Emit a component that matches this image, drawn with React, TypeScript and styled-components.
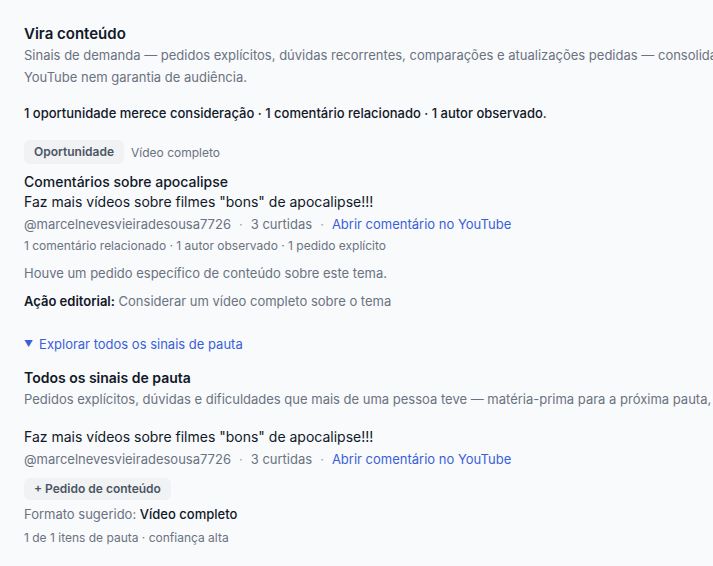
import styled, { createGlobalStyle } from "styled-components";

const GlobalStyle = createGlobalStyle`
  body {
    margin: 0;
    background: #f8fafc;
    font-family: Inter, "Noto Sans", sans-serif;
    color: #111827;
    overflow: hidden;
  }
`;

interface Signal {
  quote: string;
  author: string;
  likes: number;
}

const signal: Signal = {
  quote: 'Faz mais vídeos sobre filmes "bons" de apocalipse!!!',
  author: "@marcelnevesvieiradesousa7726",
  likes: 3,
};

function MetaRow({ s }: { s: Signal }) {
  return (
    <Meta>
      <span>{s.author}</span>
      <Sep>·</Sep>
      <span>{s.likes} curtidas</span>
      <Sep>·</Sep>
      <Link href="#">Abrir comentário no YouTube</Link>
    </Meta>
  );
}

export default function App() {
  return (
    <>
      <GlobalStyle />
      <Page>
        <Title>Vira conteúdo</Title>
        <Desc>
          Sinais de demanda — pedidos explícitos, dúvidas recorrentes, comparações e atualizações
          pedidas — consolidados dos comentários. Não é métrica do YouTube nem garantia de
          audiência.
        </Desc>
        <Summary>1 oportunidade merece consideração · 1 comentário relacionado · 1 autor observado.</Summary>

        <TagRow>
          <Badge>Oportunidade</Badge>
          <Format>Vídeo completo</Format>
        </TagRow>
        <ItemTitle>Comentários sobre apocalipse</ItemTitle>
        <Quote>{signal.quote}</Quote>
        <MetaRow s={signal} />
        <Stats>1 comentário relacionado · 1 autor observado · 1 pedido explícito</Stats>
        <Note>Houve um pedido específico de conteúdo sobre este tema.</Note>
        <Note>
          <strong>Ação editorial:</strong> Considerar um vídeo completo sobre o tema
        </Note>

        <Toggle>
          <Caret>▼</Caret>Explorar todos os sinais de pauta
        </Toggle>

        <SectionTitle>Todos os sinais de pauta</SectionTitle>
        <Desc $nowrap>
          Pedidos explícitos, dúvidas e dificuldades que mais de uma pessoa teve — matéria-prima para
          a próxima pauta, não uma lista de tarefas.
        </Desc>

        <Quote $gap>{signal.quote}</Quote>
        <MetaRow s={signal} />
        <Badge $small>+ Pedido de conteúdo</Badge>
        <Suggested>
          Formato sugerido: <b>Vídeo completo</b>
        </Suggested>
        <Stats $gap>1 de 1 itens de pauta · confiança alta</Stats>
      </Page>
    </>
  );
}

const Page = styled.div`
  width: 1000px;
  padding: 24px 24px;
  display: flex;
  flex-direction: column;
  align-items: flex-start;
`;

const Title = styled.h3`
  margin: 0;
  font-size: 15px;
  line-height: 20px;
  font-weight: 600;
  color: #111827;
`;

const SectionTitle = styled(Title)`
  font-size: 14px;
  margin-top: 14px;
`;

const Desc = styled.p<{ $nowrap?: boolean }>`
  margin: 0;
  max-width: 960px;
  font-size: 13px;
  line-height: 22px;
  color: #6b7280;
  white-space: ${(p) => (p.$nowrap ? "nowrap" : "normal")};
`;

const Summary = styled.div`
  margin-top: 15px;
  font-size: 13px;
  line-height: 20px;
  font-weight: 500;
  color: #111827;
`;

const TagRow = styled.div`
  margin-top: 17px;
  display: flex;
  align-items: center;
  gap: 7px;
`;

const Badge = styled.span<{ $small?: boolean }>`
  display: inline-block;
  padding: ${(p) => (p.$small ? "3px 10px" : "4px 10px")};
  margin-top: ${(p) => (p.$small ? "9px" : "0")};
  background: #f0f2f4;
  border-radius: 6px;
  font-size: 12px;
  line-height: 16px;
  font-weight: 600;
  color: #4b5563;
`;

const Format = styled.span`
  font-size: 12px;
  color: #6b7280;
`;

const ItemTitle = styled.div`
  margin-top: 8px;
  font-size: 14px;
  line-height: 20px;
  font-weight: 500;
  color: #111827;
`;

const Quote = styled.div<{ $gap?: boolean }>`
  margin-top: ${(p) => (p.$gap ? "17px" : "0")};
  font-size: 14px;
  line-height: 20px;
  color: #111827;
`;

const Meta = styled.div`
  margin-top: 2px;
  display: flex;
  align-items: center;
  gap: 8px;
  font-size: 13px;
  line-height: 20px;
  color: #6b7280;
`;

const Sep = styled.span`
  color: #9ca3af;
`;

const Link = styled.a`
  color: #3b5fd9;
  text-decoration: none;
`;

const Stats = styled.div<{ $gap?: boolean }>`
  margin-top: ${(p) => (p.$gap ? "5px" : "3px")};
  font-size: 12px;
  line-height: 18px;
  color: #6b7280;
`;

const Note = styled.div`
  margin-top: 8px;
  font-size: 13px;
  line-height: 20px;
  color: #6b7280;

  strong {
    font-weight: 600;
    color: #111827;
  }
`;

const Toggle = styled.div`
  margin-top: 23px;
  display: flex;
  align-items: center;
  font-size: 13px;
  line-height: 20px;
  color: #3b5fd9;
  cursor: pointer;
`;

const Caret = styled.span`
  font-size: 9px;
  margin-right: 6px;
`;

const Suggested = styled.div`
  margin-top: 4px;
  font-size: 13px;
  line-height: 20px;
  color: #6b7280;

  b {
    font-weight: 500;
    color: #111827;
  }
`;
